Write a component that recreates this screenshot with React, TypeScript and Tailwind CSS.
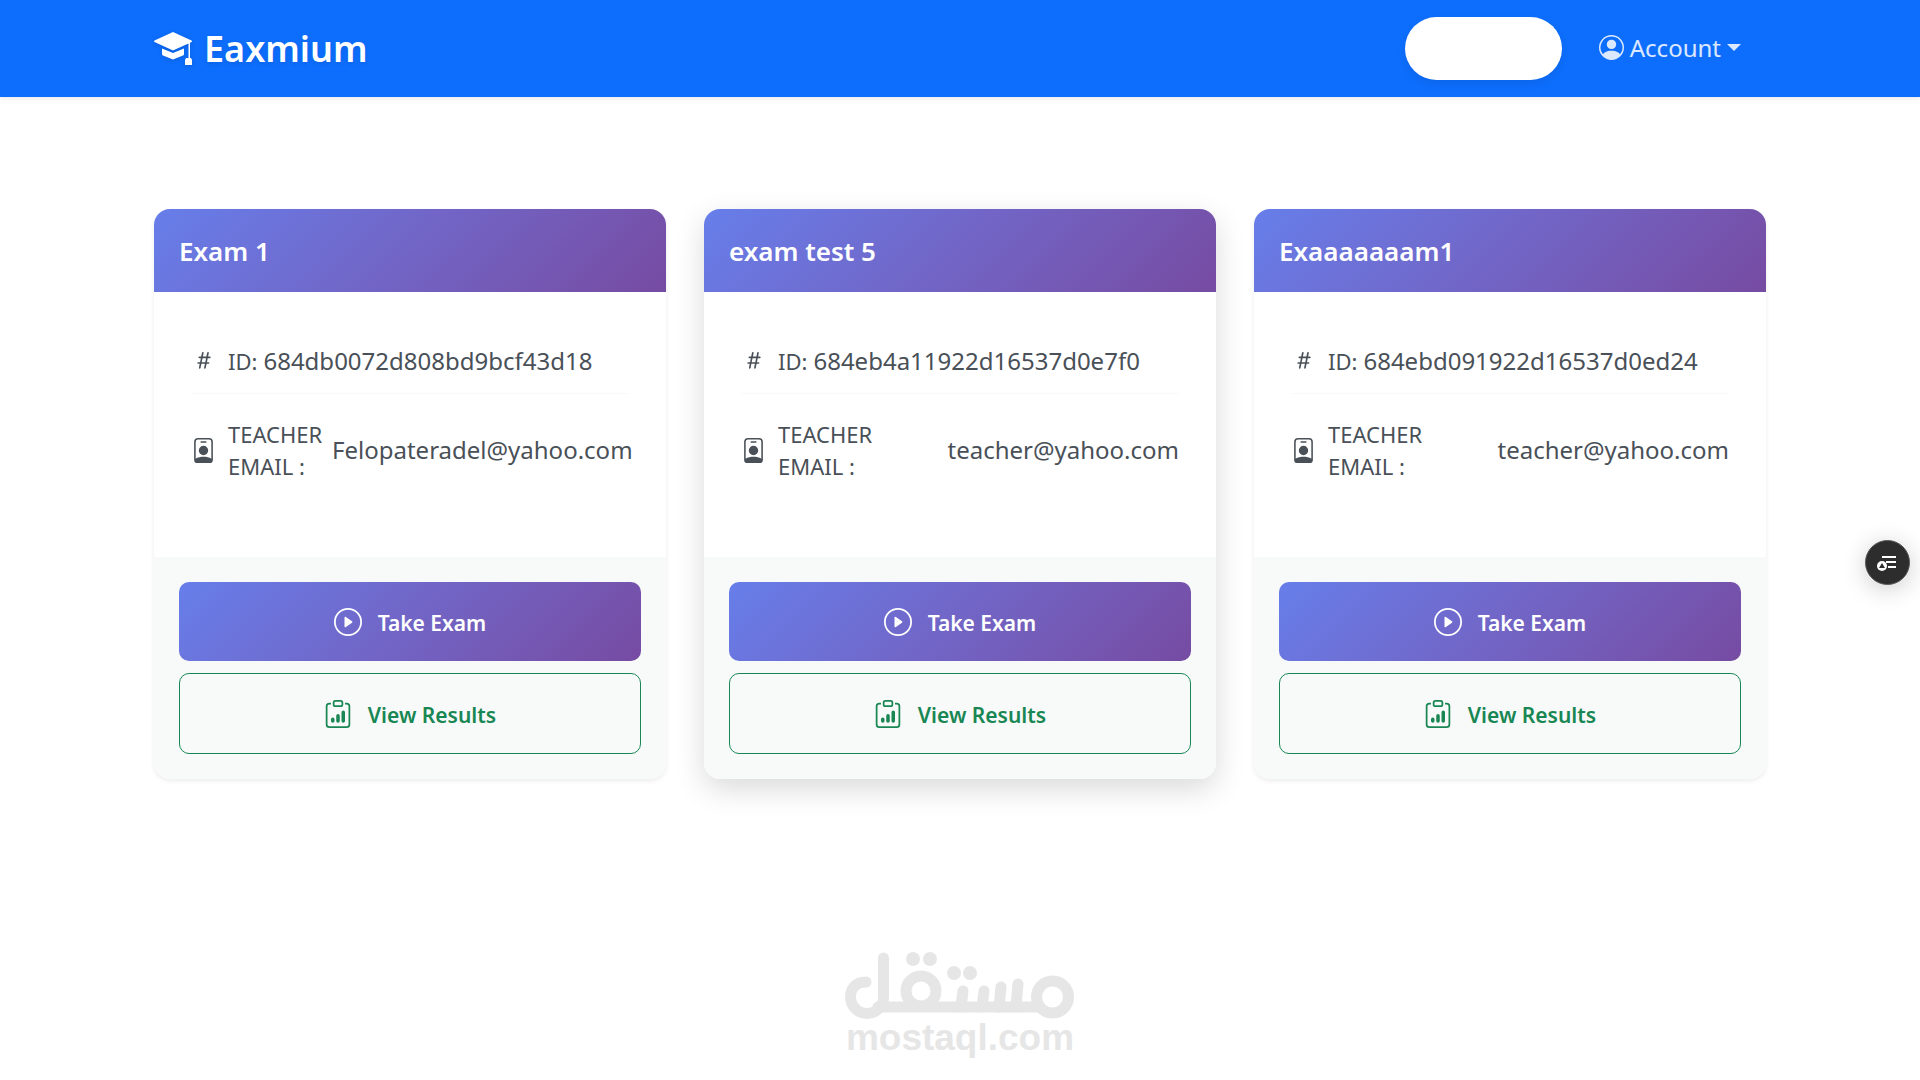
import { BsPersonCircle, BsHash, BsPersonBadge, BsPlayCircle, BsClipboardData } from "react-icons/bs";

const exams = [
  { title: "Exam 1", id: "684db0072d808bd9bcf43d18", email: "Felopateradel@yahoo.com", raised: false },
  { title: "exam test 5", id: "684eb4a11922d16537d0e7f0", email: "teacher@yahoo.com", raised: true },
  { title: "Exaaaaaaam1", id: "684ebd091922d16537d0ed24", email: "teacher@yahoo.com", raised: false },
];

function CapIcon() {
  return (
    <svg viewBox="0 0 38 34" className="h-[34px] w-[38px] drop-shadow-sm" fill="currentColor" aria-hidden="true">
      <path d="M19 0 L37.500 8.500 Q38.500 9.500 37.500 10 L36 10.700 V26 H37 L38 28 V33 H31 V28 L32 26 H34.500 V11.500 L20 18 Q19 18.400 18 18 L0.500 10 Q-0.300 9.200 0.500 8.500 Z" />
      <path d="M8 16.5 L19 21 L30 16.5 V22 Q30 23 29 23.5 L19 27.5 L9 23.5 Q8 23 8 22 Z" />
    </svg>
  );
}

function Header() {
  return (
    <header className="bg-[#0d6efd] text-white shadow-[0_2px_4px_rgba(0,0,0,0.08)]">
      <nav className="mx-auto flex h-[97px] max-w-[1612px] items-center justify-between">
        <a href="#home" className="flex items-center gap-3 text-4xl font-semibold text-shadow-[0_2px_4px_rgba(0,0,0,0.1)]">
          <CapIcon />
          Eaxmium
        </a>
        <div className="flex items-center gap-[37px] pr-[25px]">
          <button type="button" aria-label="Exams" className="h-[63px] w-[157px] rounded-full bg-white shadow-[0_4px_8px_rgba(0,0,0,0.08)]" />
          <button type="button" className="flex items-center gap-1.5 pb-0.5 text-2xl text-white/85">
            <BsPersonCircle className="size-[25px]" />
            Account
            <svg viewBox="0 0 14 7" className="h-[7px] w-[14px]" fill="currentColor" aria-hidden="true">
              <path d="M0 0H14L7 7Z" />
            </svg>
          </button>
        </div>
      </nav>
    </header>
  );
}

function ExamCard({ exam }: { exam: (typeof exams)[number] }) {
  return (
    <article
      className={
        exam.raised
          ? "flex flex-col overflow-hidden rounded-2xl bg-white shadow-[0_10px_30px_rgba(0,0,0,0.15)]"
          : "flex flex-col overflow-hidden rounded-2xl bg-white shadow-[0_2px_5px_rgba(0,0,0,0.08)]"
      }
    >
      <h2 className="bg-linear-135 from-[#667eea] to-[#764ba2] px-[25px] pt-[25px] pb-[23px] text-[26px]/[35px] font-semibold text-white">
        {exam.title}
      </h2>
      <dl className="flex h-[265px] flex-col px-[37px] pt-9 text-[#495057]">
        <div className="flex h-[66px] items-center border-b border-[#f8f9fa]">
          <BsHash className="mr-3 size-[25px] shrink-0" />
          <dt className="mr-1.5 text-[22px]/8">ID:</dt>
          <dd className="text-2xl">{exam.id}</dd>
        </div>
        <div className="flex h-[112px] items-center">
          <BsPersonBadge className="mr-3 size-[25px] shrink-0" />
          <dt className="w-[104px] shrink-0 text-[22px]/8">TEACHER EMAIL :</dt>
          <dd className="ml-auto text-2xl">{exam.email}</dd>
        </div>
      </dl>
      <div className="flex flex-col gap-3 bg-[#f8faf9] p-[25px] text-[21px] font-semibold">
        <button type="button" className="flex h-[79px] items-center justify-center gap-4 rounded-[10px] bg-linear-135 from-[#667eea] to-[#764ba2] text-white">
          <BsPlayCircle className="size-7" />
          <span className="pt-1">Take Exam</span>
        </button>
        <button type="button" className="flex h-[81px] items-center justify-center gap-4 rounded-[10px] border border-[#198754] text-[#198754]">
          <BsClipboardData className="size-7" />
          <span className="pt-1">View Results</span>
        </button>
      </div>
    </article>
  );
}

function Watermark() {
  return (
    <div className="mx-auto flex w-[230px] flex-col items-center text-[#e6e6e6]">
      <svg viewBox="0 0 230 68" className="h-[68px] w-[230px]" fill="none" stroke="currentColor" strokeWidth="11" strokeLinecap="round" role="img" aria-label="مستقل">
        <path d="M21 30C9 30 5.500 39 5.500 45A16.500 16.500 0 0 0 38.500 45V6M33 55H195" />
        <circle cx="76" cy="39" r="15" />
        <circle cx="207.500" cy="45" r="16" />
        <path d="M116 55L118 39M137 55L139 39M154 55L156 35M171 55L173 32" />
        <g fill="currentColor" stroke="none">
          <circle cx="68" cy="7" r="7" />
          <circle cx="85" cy="7" r="7" />
          <circle cx="109" cy="21" r="7" />
          <circle cx="125" cy="21" r="7" />
        </g>
      </svg>
      <span className="font-['Liberation_Sans',sans-serif] text-[37px]/9 font-bold">mostaql.com</span>
    </div>
  );
}

export default function App() {
  return (
    <div className="flex min-h-screen flex-col bg-white font-['Noto_Sans',sans-serif]">
      <Header />
      <main className="mx-auto mt-28 grid w-full max-w-[1612px] grid-cols-3 gap-[38px]">
        {exams.map((exam) => (
          <ExamCard key={exam.id} exam={exam} />
        ))}
      </main>
      <footer className="mt-[173px]">
        <Watermark />
      </footer>
      <button type="button" aria-label="Open side menu" className="fixed top-[540px] right-2.5 flex size-[45px] items-center justify-center rounded-full border border-[#555] bg-[#2d2d2d] text-white shadow-[0_4px_24px_rgba(0,0,0,0.2)]">
        <svg viewBox="0 0 22 18" className="mr-1 h-[18px] w-[22px]" fill="none" stroke="currentColor" strokeWidth="2" aria-hidden="true">
          <path d="M7 3H21M11 8H21M13 13H21" />
          <circle cx="7" cy="12" r="5" fill="white" stroke="none" />
          <path d="M7 9L10 14H4Z" fill="#2d2d2d" stroke="none" />
        </svg>
      </button>
    </div>
  );
}
